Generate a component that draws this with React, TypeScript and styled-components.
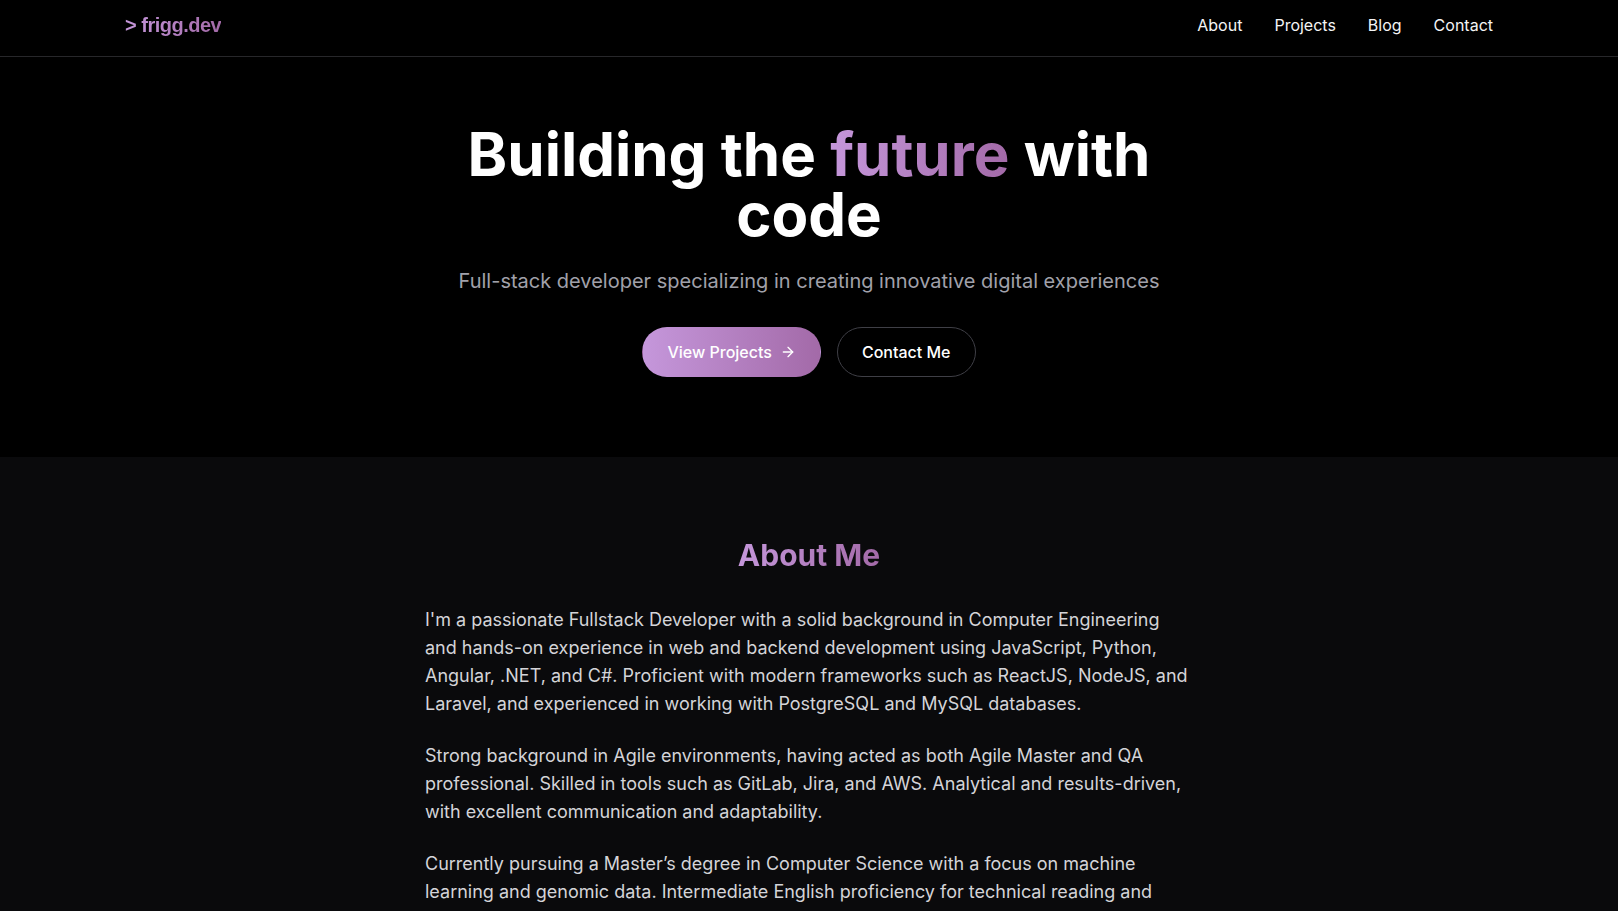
import React from "react";
import styled, { createGlobalStyle } from "styled-components";
import { ArrowRight } from "lucide-react";

const GlobalStyle = createGlobalStyle`
  body {
    margin: 0;
    background: #000;
    font-family: "Inter", "Noto Sans", sans-serif;
    color: #fff;
  }
  * { box-sizing: border-box; }
`;

const purple = "linear-gradient(90deg, #c597db, #a36aa8)";

const Header = styled.header`
  height: 57px;
  border-bottom: 1px solid #27272a;
  background: #000;
`;

const HeaderInner = styled.div`
  max-width: 1400px;
  height: 100%;
  margin: 0 auto;
  padding: 0 16px 6px;
  display: flex;
  align-items: center;
  justify-content: space-between;
`;

const Logo = styled.a`
  font-family: "Liberation Sans", Arial, sans-serif;
  font-weight: bold;
  font-size: 20px;
  letter-spacing: -0.5px;
  background: ${purple};
  -webkit-background-clip: text;
  background-clip: text;
  color: transparent;
`;

const Nav = styled.nav`
  display: flex;
  gap: 32px;
`;

const NavLink = styled.a`
  color: #f4f4f5;
  font-size: 16px;
  text-decoration: none;
`;

const Hero = styled.section`
  padding: 67px 16px 80px;
  display: flex;
  flex-direction: column;
  align-items: center;
  text-align: center;
`;

const Title = styled.h1`
  max-width: 768px;
  margin: 0;
  font-size: 60px;
  line-height: 60px;
  font-weight: 700;
`;

const Accent = styled.span`
  background: ${purple};
  -webkit-background-clip: text;
  background-clip: text;
  color: transparent;
`;

const Subtitle = styled.p`
  margin: 23px 0 32px;
  font-size: 20px;
  line-height: 28px;
  color: #a1a1aa;
`;

const Buttons = styled.div`
  display: flex;
  gap: 16px;
`;

const Button = styled.a<{ $primary?: boolean }>`
  display: inline-flex;
  align-items: center;
  gap: 8px;
  height: 50px;
  padding: 0 24px;
  border-radius: 999px;
  font-size: 16px;
  font-weight: 500;
  color: #fff;
  background: ${(p) => (p.$primary ? purple : "#000")};
  border: 1px solid ${(p) => (p.$primary ? "transparent" : "#3f3f46")};
  text-decoration: none;
`;

const About = styled.section`
  background: #0a0a0c;
  padding: 80px 16px;
`;

const AboutInner = styled.div`
  max-width: 768px;
  margin: 0 auto;
`;

const SectionTitle = styled.h2`
  margin: 0 0 33px;
  text-align: center;
  font-size: 30px;
  line-height: 36px;
  font-weight: 700;
`;

const Para = styled.p`
  margin: 0 0 24px;
  font-size: 18px;
  line-height: 28px;
  color: #d4d4d8;
`;

export default function App() {
  return (
    <>
      <GlobalStyle />
      <Header>
        <HeaderInner>
          <Logo>&gt; frigg.dev</Logo>
          <Nav>
            <NavLink href="#about">About</NavLink>
            <NavLink href="#projects">Projects</NavLink>
            <NavLink href="#blog">Blog</NavLink>
            <NavLink href="#contact">Contact</NavLink>
          </Nav>
        </HeaderInner>
      </Header>
      <Hero>
        <Title>
          Building the <Accent>future</Accent> with code
        </Title>
        <Subtitle>
          Full-stack developer specializing in creating innovative digital experiences
        </Subtitle>
        <Buttons>
          <Button $primary href="#projects">
            View Projects <ArrowRight size={16} />
          </Button>
          <Button href="#contact">Contact Me</Button>
        </Buttons>
      </Hero>
      <About id="about">
        <AboutInner>
          <SectionTitle>
            <Accent>About Me</Accent>
          </SectionTitle>
          <Para>
            I'm a passionate Fullstack Developer with a solid background in Computer
            Engineering and hands-on experience in web and backend development using
            JavaScript, Python, Angular, .NET, and C#. Proficient with modern frameworks
            such as ReactJS, NodeJS, and Laravel, and experienced in working with
            PostgreSQL and MySQL databases.
          </Para>
          <Para>
            Strong background in Agile environments, having acted as both Agile Master
            and QA professional. Skilled in tools such as GitLab, Jira, and AWS.
            Analytical and results-driven, with excellent communication and adaptability.
          </Para>
          <Para>
            Currently pursuing a Master’s degree in Computer Science with a focus on
            machine learning and genomic data. Intermediate English proficiency for
            technical reading and writing.
          </Para>
        </AboutInner>
      </About>
    </>
  );
}
